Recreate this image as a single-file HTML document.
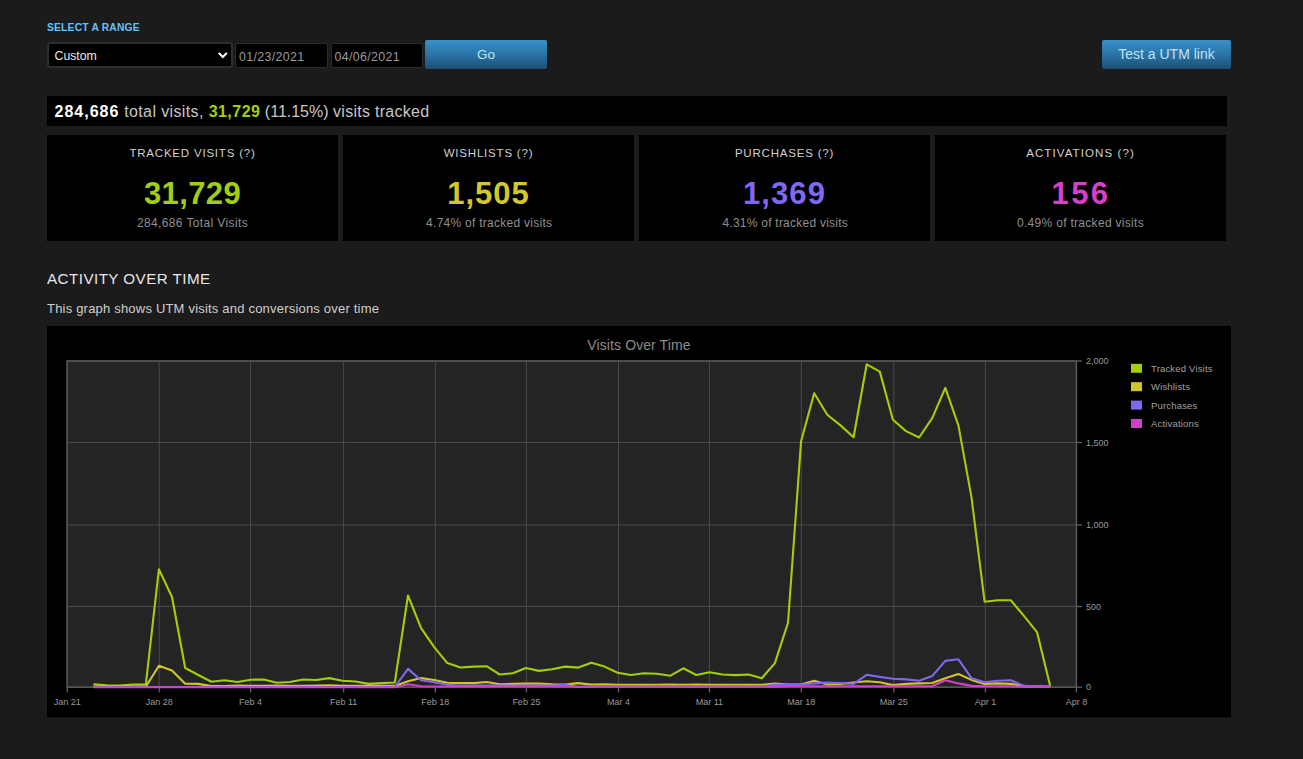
<!DOCTYPE html>
<html><head><meta charset="utf-8">
<style>
html,body{margin:0;padding:0;}
body{width:1303px;height:759px;overflow:hidden;background:#1b1b1b;position:relative;font-family:"Liberation Sans",sans-serif;}
.a{position:absolute;white-space:nowrap;}
#chart{position:absolute;left:0;top:0;}
#chart text{font-family:"Liberation Sans",sans-serif;}
.lbl{left:47px;top:21px;letter-spacing:0.19px;font-size:10.3px;font-weight:bold;color:#67c1f5;line-height:14px;}
.sel{left:47px;top:42px;width:182px;height:22px;background:#000;border:2px solid #2e2e2e;border-radius:3px;}
.sel span{position:absolute;left:5.5px;top:3.5px;font-size:12.3px;color:#e8e8e8;line-height:16px;}
.chev{position:absolute;left:172px;top:7.5px;width:4.5px;height:4.5px;border-right:1.8px solid #fff;border-bottom:1.8px solid #fff;transform:rotate(45deg);}
.inp{top:43px;width:90.5px;height:23px;background:#000;border:1px solid #2c2c2c;border-radius:2px;}
.inp span{position:absolute;left:3px;top:4.5px;font-size:12.4px;color:#9a9a9a;line-height:16px;letter-spacing:0.35px;}
.btn{top:40px;height:29px;border-radius:2px;background:linear-gradient(to bottom,#3890c8 0%,#2a74a7 50%,#1c4e72 100%);color:#bfe2f8;text-align:center;line-height:29px;}
.bar{left:47px;top:96px;width:1180.3px;height:30px;background:#000;}
.bar span.t{position:absolute;left:7.5px;top:5.7px;font-size:16px;line-height:20px;color:#c7c7c7;letter-spacing:0.38px;}
.card{top:135px;width:291px;height:106px;background:#000;text-align:center;}
.card .h{position:absolute;left:0;right:0;top:11px;font-size:11.5px;line-height:14px;letter-spacing:0.8px;color:#d0d0d0;}
.card .n{position:absolute;left:0;right:0;top:41.5px;font-size:31px;font-weight:bold;line-height:34px;letter-spacing:0.4px;}
.card .s{position:absolute;left:0;right:0;top:79.7px;font-size:12px;line-height:16px;color:#8f8f8f;letter-spacing:0.38px;}
.sec{left:47px;top:269.7px;font-size:15.2px;line-height:18px;color:#e6e6e6;letter-spacing:0.45px;}
.desc{left:47px;top:300.7px;font-size:13px;line-height:16px;color:#cfcfcf;letter-spacing:0.2px;}
</style></head><body>
<div class="a lbl">SELECT A RANGE</div>
<div class="a sel"><span>Custom</span></div>
<div class="a inp" style="left:235px;"><span>01/23/2021</span></div>
<div class="a inp" style="left:330.5px;"><span>04/06/2021</span></div>
<div class="a btn" style="left:425px;width:122px;font-size:13.5px;">Go</div>
<div class="a btn" style="left:1102px;width:129px;font-size:14px;">Test a UTM link</div>
<div class="a bar"><span class="t"><b style="color:#fff;letter-spacing:1px">284,686</b> total visits, <b style="color:#a4d007;letter-spacing:0.47px">31,729</b><span style="letter-spacing:0px"> (11.15%) </span><span style="letter-spacing:0.28px">visits tracked</span></span></div>
<div class="a card" style="left:47px"><div class="h">TRACKED VISITS (?)</div><div class="n" style="color:#a1cd12">31,729</div><div class="s">284,686 Total Visits</div></div>
<div class="a card" style="left:343px"><div class="h">WISHLISTS (?)</div><div class="n" style="color:#d2c82a;letter-spacing:0.98px">1,505</div><div class="s" style="letter-spacing:0.27px;left:1.5px">4.74% of tracked visits</div></div>
<div class="a card" style="left:639px"><div class="h">PURCHASES (?)</div><div class="n" style="color:#8168f2;letter-spacing:1.1px">1,369</div><div class="s" style="letter-spacing:0.24px;left:1.5px">4.31% of tracked visits</div></div>
<div class="a card" style="left:935px"><div class="h" style="letter-spacing:1.1px">ACTIVATIONS (?)</div><div class="n" style="color:#d63fc9;letter-spacing:2.4px;padding-left:1px">156</div><div class="s" style="letter-spacing:0.3px">0.49% of tracked visits</div></div>
<div class="a sec">ACTIVITY OVER TIME</div>
<div class="a desc">This graph shows UTM visits and conversions over time</div>
<svg id="chart" width="1303" height="759" viewBox="0 0 1303 759">
<rect x="47" y="326" width="1184" height="391.5" fill="#000"/>
<text x="639" y="350.3" text-anchor="middle" font-size="14" fill="#8c8c8c" letter-spacing="0.1">Visits Over Time</text>
<rect x="67.2" y="361" width="1009.2" height="326.2" fill="#242424"/>
<g><line x1="67.2" y1="361" x2="67.2" y2="687" stroke="#4a4a4a" stroke-width="1"/><line x1="67.2" y1="687" x2="67.2" y2="692.5" stroke="#5a5a5a" stroke-width="1.4"/><line x1="159.2" y1="361" x2="159.2" y2="687" stroke="#4a4a4a" stroke-width="1"/><line x1="159.2" y1="687" x2="159.2" y2="692.5" stroke="#5a5a5a" stroke-width="1.4"/><line x1="250.6" y1="361" x2="250.6" y2="687" stroke="#4a4a4a" stroke-width="1"/><line x1="250.6" y1="687" x2="250.6" y2="692.5" stroke="#5a5a5a" stroke-width="1.4"/><line x1="343.6" y1="361" x2="343.6" y2="687" stroke="#4a4a4a" stroke-width="1"/><line x1="343.6" y1="687" x2="343.6" y2="692.5" stroke="#5a5a5a" stroke-width="1.4"/><line x1="435.3" y1="361" x2="435.3" y2="687" stroke="#4a4a4a" stroke-width="1"/><line x1="435.3" y1="687" x2="435.3" y2="692.5" stroke="#5a5a5a" stroke-width="1.4"/><line x1="526.4" y1="361" x2="526.4" y2="687" stroke="#4a4a4a" stroke-width="1"/><line x1="526.4" y1="687" x2="526.4" y2="692.5" stroke="#5a5a5a" stroke-width="1.4"/><line x1="618.5" y1="361" x2="618.5" y2="687" stroke="#4a4a4a" stroke-width="1"/><line x1="618.5" y1="687" x2="618.5" y2="692.5" stroke="#5a5a5a" stroke-width="1.4"/><line x1="709.4" y1="361" x2="709.4" y2="687" stroke="#4a4a4a" stroke-width="1"/><line x1="709.4" y1="687" x2="709.4" y2="692.5" stroke="#5a5a5a" stroke-width="1.4"/><line x1="801.3" y1="361" x2="801.3" y2="687" stroke="#4a4a4a" stroke-width="1"/><line x1="801.3" y1="687" x2="801.3" y2="692.5" stroke="#5a5a5a" stroke-width="1.4"/><line x1="893.8" y1="361" x2="893.8" y2="687" stroke="#4a4a4a" stroke-width="1"/><line x1="893.8" y1="687" x2="893.8" y2="692.5" stroke="#5a5a5a" stroke-width="1.4"/><line x1="985.4" y1="361" x2="985.4" y2="687" stroke="#4a4a4a" stroke-width="1"/><line x1="985.4" y1="687" x2="985.4" y2="692.5" stroke="#5a5a5a" stroke-width="1.4"/><line x1="1076.4" y1="361" x2="1076.4" y2="687" stroke="#4a4a4a" stroke-width="1"/><line x1="1076.4" y1="687" x2="1076.4" y2="692.5" stroke="#5a5a5a" stroke-width="1.4"/><line x1="67" y1="687.2" x2="1076.4" y2="687.2" stroke="#4a4a4a" stroke-width="1"/><line x1="1076.4" y1="687.2" x2="1082" y2="687.2" stroke="#5a5a5a" stroke-width="1.4"/><line x1="67" y1="606.5" x2="1076.4" y2="606.5" stroke="#4a4a4a" stroke-width="1"/><line x1="1076.4" y1="606.5" x2="1082" y2="606.5" stroke="#5a5a5a" stroke-width="1.4"/><line x1="67" y1="525.0" x2="1076.4" y2="525.0" stroke="#4a4a4a" stroke-width="1"/><line x1="1076.4" y1="525.0" x2="1082" y2="525.0" stroke="#5a5a5a" stroke-width="1.4"/><line x1="67" y1="442.5" x2="1076.4" y2="442.5" stroke="#4a4a4a" stroke-width="1"/><line x1="1076.4" y1="442.5" x2="1082" y2="442.5" stroke="#5a5a5a" stroke-width="1.4"/><line x1="67" y1="361.0" x2="1076.4" y2="361.0" stroke="#4a4a4a" stroke-width="1"/><line x1="1076.4" y1="361.0" x2="1082" y2="361.0" stroke="#5a5a5a" stroke-width="1.4"/></g>
<rect x="67.2" y="361" width="1009.2" height="326.2" fill="none" stroke="#555" stroke-width="1.6"/>
<g font-size="9" fill="#9a9a9a"><text x="67.2" y="705" text-anchor="middle">Jan 21</text><text x="159.2" y="705" text-anchor="middle">Jan 28</text><text x="250.6" y="705" text-anchor="middle">Feb 4</text><text x="343.6" y="705" text-anchor="middle">Feb 11</text><text x="435.3" y="705" text-anchor="middle">Feb 18</text><text x="526.4" y="705" text-anchor="middle">Feb 25</text><text x="618.5" y="705" text-anchor="middle">Mar 4</text><text x="709.4" y="705" text-anchor="middle">Mar 11</text><text x="801.3" y="705" text-anchor="middle">Mar 18</text><text x="893.8" y="705" text-anchor="middle">Mar 25</text><text x="985.4" y="705" text-anchor="middle">Apr 1</text><text x="1076.4" y="705" text-anchor="middle">Apr 8</text><text x="1086" y="690.4">0</text><text x="1086" y="609.7">500</text><text x="1086" y="528.2">1,000</text><text x="1086" y="445.7">1,500</text><text x="1086" y="364.2">2,000</text></g>
<g fill="none" stroke-width="2.1" stroke-linejoin="round" stroke-linecap="butt">
<path d="M93.4 684.4 L106.5 685.4 L119.6 685.6 L132.7 684.6 L145.8 684.6 L158.9 569.3 L172.0 597.0 L185.2 668.0 L198.3 675.0 L211.4 681.8 L224.5 680.3 L237.6 682.0 L250.7 679.7 L263.8 679.5 L276.9 682.8 L290.0 682.0 L303.1 679.5 L316.2 680.0 L329.3 678.1 L342.4 680.8 L355.5 681.5 L368.6 683.9 L381.7 683.1 L394.8 682.5 L408.0 595.5 L421.1 628.2 L434.2 647.2 L447.3 663.1 L460.4 667.5 L473.5 666.6 L486.6 666.2 L499.7 674.5 L512.8 673.3 L525.9 668.0 L539.0 670.9 L552.1 669.3 L565.2 666.6 L578.3 667.6 L591.4 662.7 L604.5 666.6 L617.7 672.8 L630.8 675.0 L643.9 673.3 L657.0 673.8 L670.1 675.8 L683.2 668.3 L696.3 675.0 L709.4 672.2 L722.5 674.5 L735.6 675.1 L748.7 674.5 L761.8 678.2 L774.9 663.1 L788.0 622.8 L801.1 441.2 L814.2 393.3 L827.3 414.8 L840.5 425.4 L853.6 437.2 L866.7 364.3 L879.8 371.6 L892.9 419.7 L906.0 431.1 L919.1 437.5 L932.2 418.2 L945.3 387.9 L958.4 425.4 L971.5 497.4 L984.6 601.7 L997.7 600.3 L1010.8 600.3 L1023.9 615.9 L1037.0 632.1 L1050.2 685.9" stroke="#a3ce0a"/>
<path d="M93.4 686.7 L106.5 686.7 L119.6 686.7 L132.7 686.7 L145.8 686.7 L158.9 665.8 L172.0 670.6 L185.2 683.8 L198.3 683.9 L211.4 686.1 L224.5 686.1 L237.6 685.6 L250.7 685.9 L263.8 685.7 L276.9 685.6 L290.0 685.9 L303.1 685.7 L316.2 685.6 L329.3 685.4 L342.4 685.7 L355.5 685.9 L368.6 685.9 L381.7 685.7 L394.8 685.9 L408.0 681.2 L421.1 678.1 L434.2 680.0 L447.3 682.8 L460.4 683.1 L473.5 683.1 L486.6 682.0 L499.7 684.3 L512.8 683.9 L525.9 683.6 L539.0 683.6 L552.1 684.3 L565.2 684.6 L578.3 683.1 L591.4 684.6 L604.5 684.3 L617.7 684.8 L630.8 684.8 L643.9 684.9 L657.0 684.8 L670.1 684.6 L683.2 684.8 L696.3 684.6 L709.4 684.8 L722.5 684.9 L735.6 684.8 L748.7 684.9 L761.8 684.8 L774.9 683.6 L788.0 684.6 L801.1 684.6 L814.2 680.8 L827.3 684.6 L840.5 683.9 L853.6 682.5 L866.7 681.3 L879.8 682.3 L892.9 685.1 L906.0 683.9 L919.1 683.4 L932.2 683.0 L945.3 678.2 L958.4 674.0 L971.5 679.9 L984.6 683.9 L997.7 683.4 L1010.8 683.9 L1023.9 685.9 L1037.0 686.4 L1050.2 686.7" stroke="#d0c62c"/>
<path d="M93.4 687.0 L106.5 687.0 L119.6 687.0 L132.7 687.0 L145.8 687.0 L158.9 687.0 L172.0 687.0 L185.2 687.0 L198.3 687.0 L211.4 687.0 L224.5 687.0 L237.6 687.0 L250.7 687.0 L263.8 687.0 L276.9 687.0 L290.0 687.0 L303.1 687.0 L316.2 687.0 L329.3 687.0 L342.4 687.0 L355.5 687.0 L368.6 687.0 L381.7 687.0 L394.8 687.0 L408.0 668.9 L421.1 680.3 L434.2 682.3 L447.3 684.8 L460.4 685.9 L473.5 685.6 L486.6 685.6 L499.7 685.6 L512.8 685.6 L525.9 685.6 L539.0 685.6 L552.1 685.6 L565.2 684.8 L578.3 687.0 L591.4 686.2 L604.5 686.2 L617.7 686.2 L630.8 686.2 L643.9 686.2 L657.0 686.2 L670.1 686.2 L683.2 686.2 L696.3 686.2 L709.4 686.2 L722.5 686.2 L735.6 686.2 L748.7 686.2 L761.8 686.2 L774.9 684.9 L788.0 684.6 L801.1 684.6 L814.2 683.4 L827.3 682.5 L840.5 683.0 L853.6 683.9 L866.7 674.8 L879.8 676.9 L892.9 678.7 L906.0 679.4 L919.1 680.8 L932.2 676.1 L945.3 660.9 L958.4 659.3 L971.5 678.2 L984.6 682.3 L997.7 680.8 L1010.8 680.2 L1023.9 685.9 L1037.0 686.4 L1050.2 686.4" stroke="#7f67f0"/>
<path d="M93.4 687.2 L106.5 687.2 L119.6 687.2 L132.7 687.2 L145.8 687.2 L158.9 687.2 L172.0 687.2 L185.2 687.2 L198.3 687.2 L211.4 687.2 L224.5 687.2 L237.6 687.2 L250.7 687.2 L263.8 687.2 L276.9 687.2 L290.0 687.2 L303.1 687.2 L316.2 687.2 L329.3 687.2 L342.4 687.2 L355.5 687.2 L368.6 687.2 L381.7 687.2 L394.8 687.2 L408.0 684.3 L421.1 686.2 L434.2 686.5 L447.3 686.5 L460.4 686.5 L473.5 686.5 L486.6 686.5 L499.7 686.5 L512.8 686.5 L525.9 686.5 L539.0 686.5 L552.1 686.5 L565.2 686.5 L578.3 686.7 L591.4 686.7 L604.5 686.7 L617.7 686.7 L630.8 686.7 L643.9 686.7 L657.0 686.7 L670.1 686.7 L683.2 686.7 L696.3 686.7 L709.4 686.7 L722.5 686.7 L735.6 686.7 L748.7 686.7 L761.8 686.7 L774.9 686.7 L788.0 686.2 L801.1 686.2 L814.2 686.2 L827.3 686.2 L840.5 686.2 L853.6 686.2 L866.7 686.2 L879.8 686.2 L892.9 686.2 L906.0 686.2 L919.1 686.2 L932.2 686.2 L945.3 680.3 L958.4 683.4 L971.5 685.9 L984.6 686.2 L997.7 686.2 L1010.8 686.2 L1023.9 686.9 L1037.0 686.9 L1050.2 686.9" stroke="#d23fc9"/>
</g>
<path d="M218.7 52.9 L222.8 57.0 L226.9 52.9" fill="none" stroke="#fff" stroke-width="2"/>
<g font-size="9.5" fill="#a0a0a0" letter-spacing="0.18"><rect x="1131" y="363.8" width="11" height="9" fill="#a3ce0a"/><text x="1151" y="371.8">Tracked Visits</text><rect x="1131" y="382.2" width="11" height="9" fill="#d0c62c"/><text x="1151" y="390.2">Wishlists</text><rect x="1131" y="400.6" width="11" height="9" fill="#7f67f0"/><text x="1151" y="408.6">Purchases</text><rect x="1131" y="419.0" width="11" height="9" fill="#d23fc9"/><text x="1151" y="427.0">Activations</text></g>
</svg>
</body></html>
